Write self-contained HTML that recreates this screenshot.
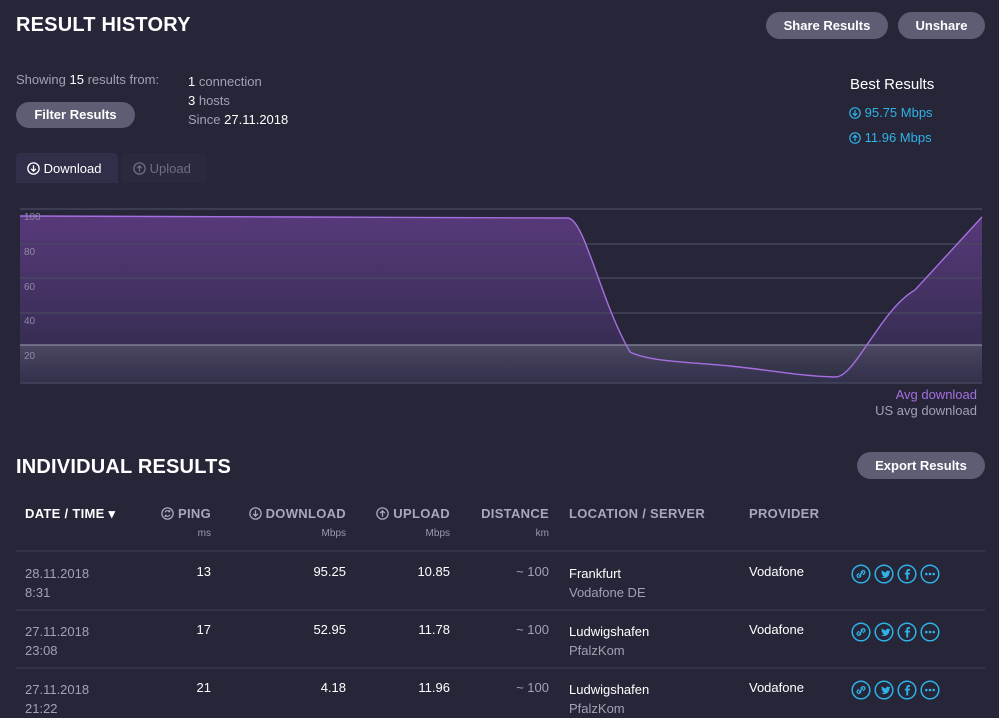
<!DOCTYPE html>
<html><head><meta charset="utf-8"><style>
*{margin:0;padding:0;box-sizing:border-box}
body{width:999px;height:713px;overflow:hidden;background:#262638;font-family:"Liberation Sans",sans-serif;color:#fff;position:relative}
.a{position:absolute;white-space:nowrap}
h1{font-size:20px;font-weight:bold;letter-spacing:.2px}
.btn{position:absolute;background:#5d5d73;border-radius:14px;color:#fff;font-weight:bold;font-size:13px;text-align:center;line-height:27px;height:27px}
.g{color:#a2a2b4}
.sm{font-size:13px}
.blue{color:#2fb2e8}
.th{font-size:13px;font-weight:bold;color:#a8a8ba;letter-spacing:.3px}
.unit{font-size:10px;color:#9a9aae}
.r{text-align:right}
.hr{position:absolute;left:16px;width:969px;height:2px;background:#33334a}
svg.i{vertical-align:-2px}
</style></head><body>
<svg width="0" height="0" style="position:absolute">
<symbol id="dn" viewBox="0 0 12 12"><circle cx="6" cy="6" r="5.2" fill="none" stroke="currentColor" stroke-width="1.2"/><path d="M6 3v5.5M3.8 6.3L6 8.5 8.2 6.3" fill="none" stroke="currentColor" stroke-width="1.2"/></symbol>
<symbol id="up" viewBox="0 0 12 12"><circle cx="6" cy="6" r="5.2" fill="none" stroke="currentColor" stroke-width="1.2"/><path d="M6 9V3.5M3.8 5.7L6 3.5 8.2 5.7" fill="none" stroke="currentColor" stroke-width="1.2"/></symbol>
<symbol id="pg" viewBox="0 0 12 12"><circle cx="6" cy="6" r="5.2" fill="none" stroke="currentColor" stroke-width="1.2"/><path d="M8 4.3A2.6 2.6 0 0 0 3.6 5M4 7.7A2.6 2.6 0 0 0 8.4 7M8 2.8v1.6H6.6M4 9.2V7.6h1.4" fill="none" stroke="currentColor" stroke-width="1"/></symbol>
<symbol id="sh" viewBox="0 0 20 20"><circle cx="10" cy="10" r="8.8" fill="none" stroke="#2fb2e8" stroke-width="1.5"/></symbol>
</svg>
<h1 class="a" style="left:16px;top:14px">RESULT HISTORY</h1>
<div class="btn" style="left:766px;top:12px;width:122px">Share Results</div>
<div class="btn" style="left:898px;top:12px;width:87px">Unshare</div>
<div class="a sm g" style="left:16px;top:72px">Showing <b style="color:#fff;font-weight:normal">15</b> results from:</div>
<div class="a sm g" style="left:188px;top:72px;line-height:19px"><span style="color:#fff">1</span> connection<br><span style="color:#fff">3</span> hosts<br>Since <span style="color:#fff">27.11.2018</span></div>
<div class="btn" style="left:16px;top:102px;width:119px;height:26px;line-height:26px">Filter Results</div>
<div class="a" style="left:850px;top:76px;font-size:15px">Best Results</div>
<div class="a sm blue" style="left:849px;top:105px"><svg class="i" width="12" height="12" style="color:#2fb2e8"><use href="#dn"/></svg> 95.75 Mbps</div>
<div class="a sm blue" style="left:849px;top:130px"><svg class="i" width="12" height="12" style="color:#2fb2e8"><use href="#up"/></svg> 11.96 Mbps</div>
<div class="a sm" style="left:16px;top:153px;width:102px;height:30px;background:#2f2f49;border-radius:4px 4px 0 0;padding:8px 0 0 11px"><svg class="i" width="13" height="13" style="color:#fff"><use href="#dn"/></svg> Download</div>
<div class="a sm" style="left:122px;top:153px;width:84px;height:30px;background:#2a2a3e;border-radius:4px 4px 0 0;padding:8px 0 0 11px;color:#6e6e82"><svg class="i" width="13" height="13" style="color:#6e6e82"><use href="#up"/></svg> Upload</div>
<svg class="a" style="left:0;top:200px" width="999" height="190">
<defs><linearGradient id="p" x1="0" y1="0" x2="0" y2="1"><stop offset="0" stop-color="#57397a"/><stop offset="1" stop-color="#2e2a48"/></linearGradient>
<linearGradient id="gr" x1="0" y1="0" x2="0" y2="1"><stop offset="0" stop-color="#55546a" stop-opacity=".7"/><stop offset="1" stop-color="#3a3a52" stop-opacity=".4"/></linearGradient></defs>
<path d="M20,16 L300,17 L568,18 C585,20 600,100 630,152 C650,162 690,162 730,166 C770,170 800,176 835,177 C855,178 880,110 915,90 L982,17 L982,183 L20,183 Z" fill="url(#p)"/>
<rect x="20" y="145" width="962" height="38" fill="url(#gr)"/>
<g stroke="#4a4a62" stroke-width="1.3"><line x1="20" y1="9" x2="982" y2="9"/><line x1="20" y1="44" x2="982" y2="44"/><line x1="20" y1="78" x2="982" y2="78"/><line x1="20" y1="113" x2="982" y2="113"/><line x1="20" y1="183" x2="982" y2="183"/></g>
<line x1="20" y1="145" x2="982" y2="145" stroke="#8a8a9e" stroke-width="1.3"/>
<path d="M20,16 L300,17 L568,18 C585,20 600,100 630,152 C650,162 690,162 730,166 C770,170 800,176 835,177 C855,178 880,110 915,90 L982,17" fill="none" stroke="#a56fe0" stroke-width="1.4"/>
<g fill="#8e8aa4" font-size="10" font-family="Liberation Sans"><text x="24" y="20">100</text><text x="24" y="55">80</text><text x="24" y="90">60</text><text x="24" y="124">40</text><text x="24" y="159">20</text></g>
<text x="20" y="199" fill="#6a6a80" font-size="12" font-family="Liberation Sans">Mbps</text>
</svg>
<div class="a sm r" style="right:22px;top:387px;color:#a56fe0">Avg download</div>
<div class="a sm r g" style="right:22px;top:403px">US avg download</div>
<h1 class="a" style="left:16px;top:456px">INDIVIDUAL RESULTS</h1>
<div class="btn" style="left:857px;top:452px;width:128px">Export Results</div>
<div class="a th" style="left:25px;top:506px;color:#fff">DATE / TIME ▾</div>
<div class="a th r" style="right:788px;top:506px"><svg class="i" width="13" height="13" style="color:#a8a8ba"><use href="#pg"/></svg> PING</div><div class="a unit r" style="right:788px;top:528px">ms</div>
<div class="a th r" style="right:653px;top:506px"><svg class="i" width="13" height="13" style="color:#a8a8ba"><use href="#dn"/></svg> DOWNLOAD</div><div class="a unit r" style="right:653px;top:528px">Mbps</div>
<div class="a th r" style="right:549px;top:506px"><svg class="i" width="13" height="13" style="color:#a8a8ba"><use href="#up"/></svg> UPLOAD</div><div class="a unit r" style="right:549px;top:528px">Mbps</div>
<div class="a th r" style="right:450px;top:506px">DISTANCE</div><div class="a unit r" style="right:450px;top:528px">km</div>
<div class="a th" style="left:569px;top:506px">LOCATION / SERVER</div>
<div class="a th" style="left:749px;top:506px">PROVIDER</div>
<div class="hr" style="top:550px"></div><div class="hr" style="top:609px"></div><div class="hr" style="top:667px"></div>

<div class="a sm g" style="left:25px;top:564px;line-height:19px">28.11.2018<br>8:31</div>
<div class="a sm r" style="right:788px;top:564px">13</div><div class="a sm r" style="right:653px;top:564px">95.25</div><div class="a sm r" style="right:549px;top:564px">10.85</div><div class="a sm r g" style="right:450px;top:564px">~ 100</div>
<div class="a sm" style="left:569px;top:564px;line-height:19px">Frankfurt<br><span class="g">Vodafone DE</span></div>
<div class="a sm" style="left:749px;top:564px">Vodafone</div>

<div class="a sm g" style="left:25px;top:622px;line-height:19px">27.11.2018<br>23:08</div>
<div class="a sm r" style="right:788px;top:622px">17</div><div class="a sm r" style="right:653px;top:622px">52.95</div><div class="a sm r" style="right:549px;top:622px">11.78</div><div class="a sm r g" style="right:450px;top:622px">~ 100</div>
<div class="a sm" style="left:569px;top:622px;line-height:19px">Ludwigshafen<br><span class="g">PfalzKom</span></div>
<div class="a sm" style="left:749px;top:622px">Vodafone</div>

<div class="a sm g" style="left:25px;top:680px;line-height:19px">27.11.2018<br>21:22</div>
<div class="a sm r" style="right:788px;top:680px">21</div><div class="a sm r" style="right:653px;top:680px">4.18</div><div class="a sm r" style="right:549px;top:680px">11.96</div><div class="a sm r g" style="right:450px;top:680px">~ 100</div>
<div class="a sm" style="left:569px;top:680px;line-height:19px">Ludwigshafen<br><span class="g">PfalzKom</span></div>
<div class="a sm" style="left:749px;top:680px">Vodafone</div>

<svg class="a" style="left:850px;top:563px" width="92" height="140">
<g id="row">
<circle cx="11" cy="11" r="8.8" fill="none" stroke="#2fb2e8" stroke-width="1.5"/>
<path d="M9.5 12.5l3-3M8.6 10.6l-1 1a1.6 1.6 0 0 0 2.3 2.3l1-1M13.4 11.4l1-1a1.6 1.6 0 0 0-2.3-2.3l-1 1" fill="none" stroke="#2fb2e8" stroke-width="1.3" stroke-linecap="round"/>
<circle cx="34" cy="11" r="8.8" fill="none" stroke="#2fb2e8" stroke-width="1.5"/>
<path d="M29 14.5c2 .4 4 0 5.2-1.4-1 0-1.6-.5-2-1.2.4 0 .7 0 1-.1-1-.3-1.7-1-1.7-2 .3.1.6.2 1 .2-1-.7-1.2-1.8-.6-2.7 1.1 1.3 2.6 2.1 4.2 2.2-.3-1.6 1.7-2.6 2.8-1.4.5-.1 1-.3 1.3-.5-.1.5-.5.9-.9 1.2.4 0 .8-.2 1.2-.3-.3.4-.7.8-1.1 1.1.1 2.6-1.8 5.2-4.8 5.4-1.5.1-3.2-.1-4.6-.5z" fill="#2fb2e8"/>
<circle cx="57" cy="11" r="8.8" fill="none" stroke="#2fb2e8" stroke-width="1.5"/>
<path d="M58.2 16.5v-5h1.6l.3-1.8h-1.9V8.6c0-.6.2-.9.9-.9h1V6.1c-.4 0-1-.1-1.5-.1-1.5 0-2.3.8-2.3 2.4v1.3H54.8v1.8h1.5v5z" fill="#2fb2e8"/>
<circle cx="80" cy="11" r="8.8" fill="none" stroke="#2fb2e8" stroke-width="1.5"/>
<circle cx="76.3" cy="11" r="1.3" fill="#2fb2e8"/><circle cx="80" cy="11" r="1.3" fill="#2fb2e8"/><circle cx="83.7" cy="11" r="1.3" fill="#2fb2e8"/>
</g>
<use href="#row" y="58"/><use href="#row" y="116"/>
</svg>
</body></html>
